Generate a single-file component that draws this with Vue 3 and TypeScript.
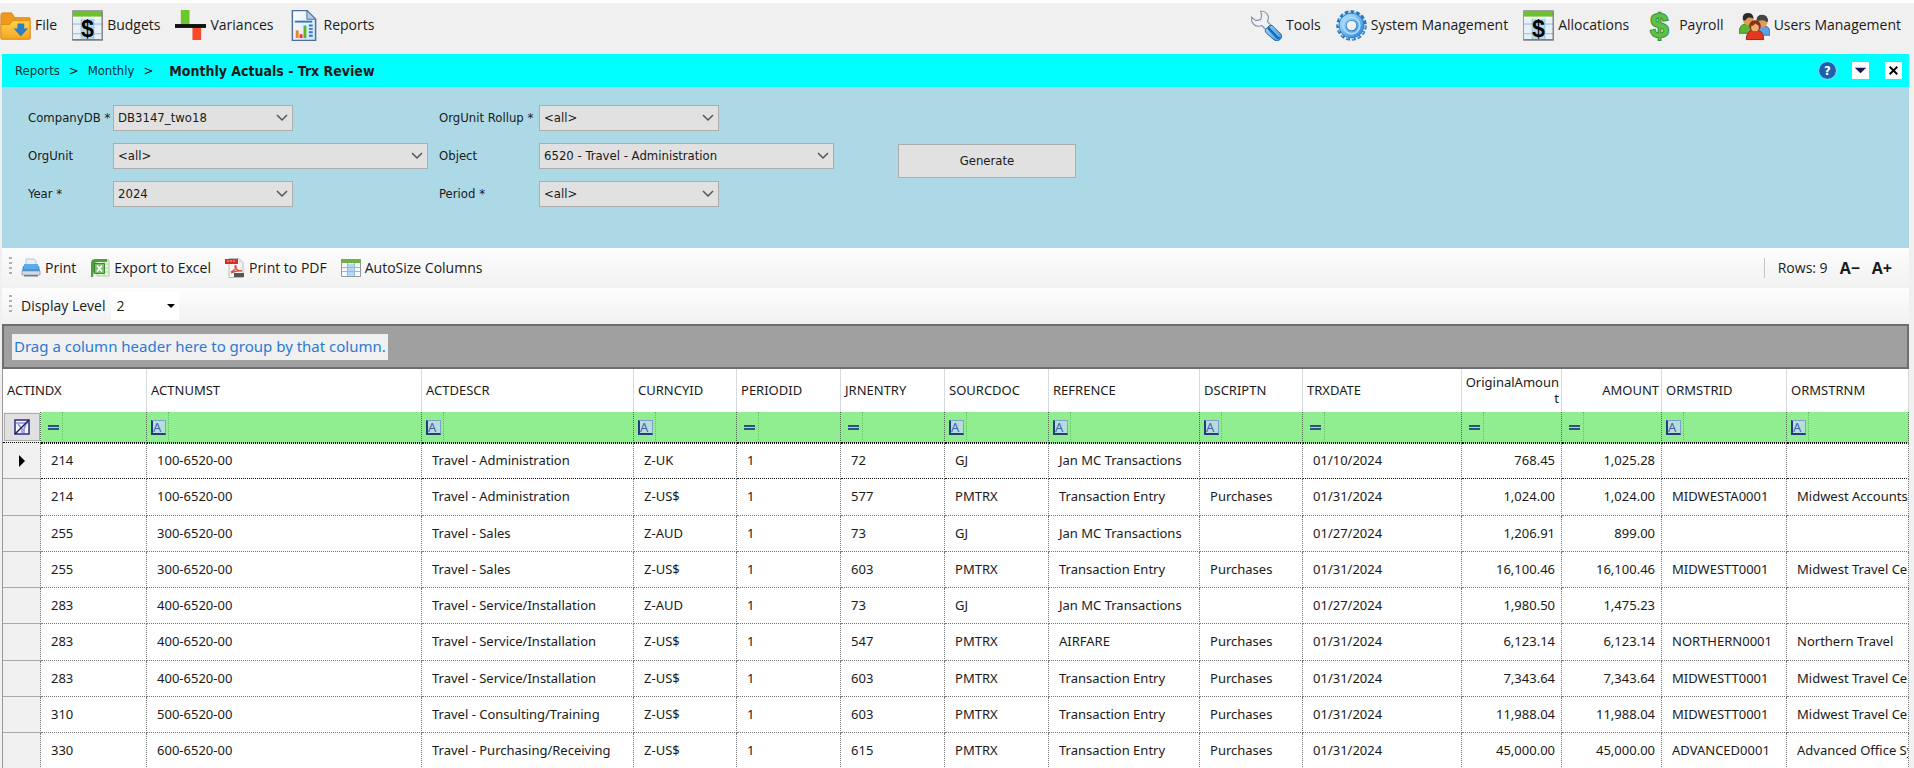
<script setup lang="ts">
import { ref } from 'vue'

interface MenuItem { label: string; icon: string; glyph?: string }
interface Column { key: string; width: number; numeric?: boolean; op: 'A' | '=' }
interface Field { id: string; label: string; value: string; wide?: boolean }

const leftMenu: MenuItem[] = [
  { label: 'File', icon: 'i-folder' },
  { label: 'Budgets', icon: 'i-budget', glyph: 'glyph-dollar' },
  { label: 'Variances', icon: 'i-variance' },
  { label: 'Reports', icon: 'i-report' },
]
const rightMenu: MenuItem[] = [
  { label: 'Tools', icon: 'i-wrench' },
  { label: 'System Management', icon: 'i-gear' },
  { label: 'Allocations', icon: 'i-budget', glyph: 'glyph-dollar' },
  { label: 'Payroll', icon: '', glyph: 'glyph-payroll' },
  { label: 'Users Management', icon: 'i-users' },
]
const tools: MenuItem[] = [
  { label: 'Print', icon: 'i-printer' },
  { label: 'Export to Excel', icon: 'i-excel' },
  { label: 'Print to PDF', icon: 'i-pdf' },
  { label: 'AutoSize Columns', icon: 'i-columns' },
]
const fields: Field[] = [
  { id: 'company', label: 'CompanyDB *', value: 'DB3147_two18' },
  { id: 'rollup', label: 'OrgUnit Rollup *', value: '<all>' },
  { id: 'orgunit', label: 'OrgUnit', value: '<all>', wide: true },
  { id: 'object', label: 'Object', value: '6520 - Travel - Administration', wide: true },
  { id: 'year', label: 'Year *', value: '2024' },
  { id: 'period', label: 'Period *', value: '<all>' },
]
const columns: Column[] = [
  { key: 'ACTINDX', width: 106, op: '=' },
  { key: 'ACTNUMST', width: 275, op: 'A' },
  { key: 'ACTDESCR', width: 212, op: 'A' },
  { key: 'CURNCYID', width: 103, op: 'A' },
  { key: 'PERIODID', width: 104, op: '=' },
  { key: 'JRNENTRY', width: 104, op: '=' },
  { key: 'SOURCDOC', width: 104, op: 'A' },
  { key: 'REFRENCE', width: 151, op: 'A' },
  { key: 'DSCRIPTN', width: 103, op: 'A' },
  { key: 'TRXDATE', width: 159, op: '=' },
  { key: 'OriginalAmount', width: 100, numeric: true, op: '=' },
  { key: 'AMOUNT', width: 100, numeric: true, op: '=' },
  { key: 'ORMSTRID', width: 125, op: 'A' },
  { key: 'ORMSTRNM', width: 0, op: 'A' },
]
const rows: string[][] = [
  ['214', '100-6520-00', 'Travel - Administration', 'Z-UK', '1', '72', 'GJ', 'Jan MC Transactions', '', '01/10/2024', '768.45', '1,025.28', '', ''],
  ['214', '100-6520-00', 'Travel - Administration', 'Z-US$', '1', '577', 'PMTRX', 'Transaction Entry', 'Purchases', '01/31/2024', '1,024.00', '1,024.00', 'MIDWESTA0001', 'Midwest Accounts'],
  ['255', '300-6520-00', 'Travel - Sales', 'Z-AUD', '1', '73', 'GJ', 'Jan MC Transactions', '', '01/27/2024', '1,206.91', '899.00', '', ''],
  ['255', '300-6520-00', 'Travel - Sales', 'Z-US$', '1', '603', 'PMTRX', 'Transaction Entry', 'Purchases', '01/31/2024', '16,100.46', '16,100.46', 'MIDWESTT0001', 'Midwest Travel Center'],
  ['283', '400-6520-00', 'Travel - Service/Installation', 'Z-AUD', '1', '73', 'GJ', 'Jan MC Transactions', '', '01/27/2024', '1,980.50', '1,475.23', '', ''],
  ['283', '400-6520-00', 'Travel - Service/Installation', 'Z-US$', '1', '547', 'PMTRX', 'AIRFARE', 'Purchases', '01/31/2024', '6,123.14', '6,123.14', 'NORTHERN0001', 'Northern Travel'],
  ['283', '400-6520-00', 'Travel - Service/Installation', 'Z-US$', '1', '603', 'PMTRX', 'Transaction Entry', 'Purchases', '01/31/2024', '7,343.64', '7,343.64', 'MIDWESTT0001', 'Midwest Travel Center'],
  ['310', '500-6520-00', 'Travel - Consulting/Training', 'Z-US$', '1', '603', 'PMTRX', 'Transaction Entry', 'Purchases', '01/31/2024', '11,988.04', '11,988.04', 'MIDWESTT0001', 'Midwest Travel Center'],
  ['330', '600-6520-00', 'Travel - Purchasing/Receiving', 'Z-US$', '1', '615', 'PMTRX', 'Transaction Entry', 'Purchases', '01/31/2024', '45,000.00', '45,000.00', 'ADVANCED0001', 'Advanced Office Systems'],
]
const active = ref(0)
</script>

<template>
  <svg class="defs" width="0" height="0" aria-hidden="true">
    <defs>
      <linearGradient id="g-fold" x2="0" y2="1"><stop offset="0" stop-color="#ffd24a" /><stop offset="1" stop-color="#f5a623" /></linearGradient>
      <linearGradient id="g-blue" x2="1" y2="1"><stop offset="0" stop-color="#a9dcfb" /><stop offset="1" stop-color="#3b8fdc" /></linearGradient>
      <linearGradient id="g-page" x2="1" y2="1"><stop offset="0" stop-color="#ffffff" /><stop offset="1" stop-color="#cfe3f7" /></linearGradient>
    </defs>
    <symbol id="i-folder" viewBox="0 0 32 32">
      <path d="M1 5q0-2 2-2h9l3 5h15q1 0 1 1v20q0 1-1 1H2q-1 0-1-1z" fill="#ef9a1a" stroke="#d9820c" />
      <path d="M1 15h9l3-4h18v18q0 1-1 1H2q-1 0-1-1z" fill="url(#g-fold)" stroke="#e08e12" />
      <path d="M18 14h7v5h4l-7.500 8-7.500-8h4z" fill="#2c7fc4" />
    </symbol>
    <symbol id="i-budget" viewBox="0 0 32 32">
      <path d="M.5.5h31v31H.5z" fill="#e6f0f6" stroke="#9a9a9a" />
      <path d="M1 1h30v6H1z" fill="#6cc22e" />
      <path d="M1 7h30v2H1z" fill="#fff" />
      <path d="M10 9h12v22H10z" fill="#b4d9ec" />
      <path d="M1 14.500h30M1 24.500h30M9.500 9v22M22.500 9v22" stroke="#8dbdd5" />
      <path d="M.5 30.500h31M31 2v29" stroke="#777" />
    </symbol>
    <symbol id="i-variance" viewBox="0 0 32 32">
      <path d="M6 0h9v15H6z" fill="#6cc72f" />
      <path d="M18 17h9v14h-9z" fill="#fb4a2b" />
      <path d="M0 14.500h32v4H0z" fill="#111" />
    </symbol>
    <symbol id="i-report" viewBox="0 0 32 32">
      <path d="M4.500.500h15l9 9v22h-24z" fill="url(#g-page)" stroke="#4c6f9e" stroke-width="1.500" />
      <path d="M19.500.500v9h9z" fill="#b7cbe4" stroke="#4c6f9e" />
      <path d="M7 12h18" stroke="#2f79c6" stroke-width="2" />
      <path d="M8 21h3v8H8z" fill="#f0812a" /><path d="M12 25h3v4h-3z" fill="#e33" /><path d="M16 16h3v13h-3z" fill="#58b52c" />
      <path d="M23.500 15v14" stroke="#2f79c6" stroke-width="4" stroke-dasharray="2 1.500" />
    </symbol>
    <symbol id="i-wrench" viewBox="0 0 32 32">
      <path d="M10 1q6 0 8 6 0 3-1 5l6 6-5 5-7-7q-5 2-8-1Q0 12 0 7l5 4 5-1 1-4z" fill="#eef1f7" stroke="#8b93a6" stroke-width="1.200" stroke-linejoin="round" />
      <path d="M15 20l4-4q3-1 5 2l7 7q2 3-1 5.500t-6 .5l-8-7q-2-2-1-4z" fill="url(#g-blue)" stroke="#1f6ba8" />
      <path d="M19 19l9 9" stroke="#1b6cae" stroke-width="4" stroke-linecap="round" />
      <path d="M20 18l9 9" stroke="#6cc4f2" stroke-width="1.500" stroke-linecap="round" />
    </symbol>
    <symbol id="i-gear" viewBox="0 0 32 32">
      <circle cx="16" cy="16" r="13.500" fill="none" stroke="#2878bd" stroke-width="4.500" stroke-dasharray="3.800 1.855" />
      <circle cx="16" cy="16" r="13" fill="none" stroke="#8ccbf6" stroke-width="3" stroke-dasharray="2.300 3.355" stroke-dashoffset="-.75" />
      <circle cx="16" cy="16" r="9" fill="none" stroke="#2878bd" stroke-width="8" />
      <circle cx="16" cy="16" r="9" fill="none" stroke="url(#g-blue)" stroke-width="6.500" />
      <circle cx="16" cy="16" r="8.500" fill="none" stroke="#a6dafa" stroke-width="2" />
    </symbol>
    <symbol id="i-users" viewBox="0 0 32 32">
      <path d="M0 24q0-10 9-10t8 10z" fill="#5db531" stroke="#3b8a1c" />
      <path d="M15 26q0-10 9-10t8 10z" fill="#5c9fe3" stroke="#3a72b5" />
      <circle cx="9.500" cy="10" r="5.500" fill="#e39a55" /><path d="M4 10q-1-7 5-7t6 6q-3-2-6-1l-3 3z" fill="#2a2a2a" />
      <circle cx="24" cy="12" r="5.500" fill="#e39a55" /><path d="M18 11q0-6 6-6t6 7h-2q-3-2-7-1z" fill="#444" />
      <path d="M7.500 30.500q0-10 9-10t9 10z" fill="#e23822" stroke="#a51f10" />
      <circle cx="16.500" cy="16.500" r="6" fill="#8a3216" /><circle cx="16.500" cy="18" r="4" fill="#f0b070" />
      <path d="M12 16q4 1 5-3 1 3 4 3l-1-5h-6z" fill="#8a3216" />
    </symbol>
    <symbol id="i-printer" viewBox="0 0 20 20">
      <path d="M5 1h8l2 2v7H5z" fill="#e4eef8" stroke="#b5c7da" />
      <path d="M2 8h3v3h10V8h3l1 5H1z" fill="#3f94dc" /><path d="M3 6h14v5H3z" fill="#5aabea" />
      <path d="M1 13h18v4H1z" fill="#d2dbe5" stroke="#8995a3" stroke-width=".7" /><path d="M3 17h14v1.500H3z" fill="#707a88" />
    </symbol>
    <symbol id="i-excel" viewBox="0 0 20 20">
      <path d="M7 2h12v16H7z" fill="#eaf5e3" stroke="#a8cf94" /><path d="M14 3v15M8 6h11M8 10h11M8 14h11" stroke="#b5d8a4" />
      <path d="M1 5q0-4 5-4h11v3H7q-2 0-2 2l-2 13H1z" fill="#4f9e3c" />
      <path d="M4.500 5.500h10v10h-10z" fill="#7cc065" stroke="#3c8a2e" /><path d="M7 7.500l5 6M12 7.500l-5 6" stroke="#fff" stroke-width="1.800" />
    </symbol>
    <symbol id="i-pdf" viewBox="0 0 20 20">
      <path d="M4 .5h10l4 4v15H4z" fill="#f6f6f6" stroke="#bbb" />
      <path d="M14 .5v4h4z" fill="#ddd" />
      <path d="M0 1h13v5H0z" fill="#dc2a22" /><path d="M2 3h9" stroke="#f0908a" stroke-width="1.500" stroke-dasharray="2 1" />
      <path d="M6 14q6-3 5-6-1-1-1 1 2 4 7 4-4-1-11 2" fill="none" stroke="#e0473d" stroke-width="1.300" />
      <path d="M9 15h10v4H9z" fill="#555" />
    </symbol>
    <symbol id="i-columns" viewBox="0 0 20 20">
      <path d="M.5 1.500h19v17H.5z" fill="#f4f8fb" stroke="#8f9aa5" />
      <path d="M0 1h20v4H0z" fill="#6fb244" /><path d="M7 6h6v12H7z" fill="#b5d8f2" />
      <path d="M1 9.500h18M1 13.500h18M6.500 5v13M13.500 5v13" stroke="#9bb7cc" />
    </symbol>
  </svg>

  <div class="app">
    <nav class="menubar">
      <div v-for="(group, gi) in [leftMenu, rightMenu]" :key="gi" class="menu-group">
        <button v-for="m in group" :key="m.label" type="button" class="menu-item">
          <svg class="icon-lg" viewBox="0 0 32 32" aria-hidden="true">
            <use v-if="m.icon" :href="'#' + m.icon" width="32" height="32" />
            <text v-if="m.glyph" x="16" y="28" text-anchor="middle" :class="m.glyph">$</text>
          </svg>{{ m.label }}
        </button>
      </div>
    </nav>

    <main class="window">
      <header class="titlebar">
        <div class="crumbs">
          <a href="#reports">Reports</a><span>&gt;</span><a href="#monthly">Monthly</a><span>&gt;</span>
          <h1>Monthly Actuals - Trx Review</h1>
        </div>
        <div class="win-actions">
          <button type="button" aria-label="Help" class="help">?</button>
          <button type="button" aria-label="Minimize" class="sq"><svg viewBox="0 0 18 18"><path d="M3 6h12l-6 6z" fill="#1c1450" /></svg></button>
          <button type="button" aria-label="Close" class="sq"><svg viewBox="0 0 18 18"><path d="M5 5l8 8M13 5l-8 8" stroke="#000" stroke-width="2" /></svg></button>
        </div>
      </header>

      <form class="filters" @submit.prevent>
        <div class="field-grid">
          <template v-for="f in fields" :key="f.id">
            <label :for="f.id">{{ f.label }}</label>
            <div class="combo" :class="{ wide: f.wide }">
              <select :id="f.id"><option>{{ f.value }}</option></select>
              <svg class="chev" viewBox="0 0 12 8"><path d="M1 1l5 5 5-5" fill="none" stroke="#555" stroke-width="1.500" /></svg>
            </div>
          </template>
        </div>
        <button type="submit" class="generate">Generate</button>
      </form>

      <div class="toolbar">
        <i class="grip" />
        <button v-for="t in tools" :key="t.label" type="button" class="tool">
          <svg class="icon-sm" aria-hidden="true"><use :href="'#' + t.icon" /></svg>{{ t.label }}
        </button>
        <div class="toolbar-end">
          <span>Rows: {{ rows.length }}</span>
          <button type="button" class="zoom" aria-label="Smaller text">A−</button>
          <button type="button" class="zoom" aria-label="Larger text">A+</button>
        </div>
      </div>

      <div class="toolbar second">
        <i class="grip" />
        <label for="level" class="level-label">Display Level</label>
        <div class="combo level">
          <select id="level"><option>2</option></select>
          <svg class="tri" viewBox="0 0 8 4"><path d="M0 0h8l-4 4z" fill="#000" /></svg>
        </div>
      </div>

      <section class="grid">
        <div class="group-box"><span>Drag a column header here to group by that column.</span></div>
        <table>
          <colgroup>
            <col class="c-sel" />
            <col v-for="c in columns" :key="c.key" :style="c.width ? { width: c.width + 'px' } : undefined" />
          </colgroup>
          <thead>
            <tr class="head">
              <th v-for="(c, i) in columns" :key="c.key" :colspan="i === 0 ? 2 : 1" :class="{ num: c.numeric }">{{ c.key }}</th>
            </tr>
            <tr class="filter">
              <td class="clear">
                <button type="button" aria-label="Clear filters">
                  <svg viewBox="0 0 16 16"><path d="M1 1h14v14H1z" fill="#f4f4fb" stroke="#2a2a80" stroke-width="1.500" /><path d="M2 4h12M4 5l4 5v4M12 5l-2 5v4" fill="none" stroke="#8c8cd8" stroke-width="1.500" /><path d="M1 15L15 1" stroke="#1c1c60" stroke-width="1.500" /></svg>
                </button>
              </td>
              <td v-for="c in columns" :key="c.key">
                <div class="filter-cell">
                  <button type="button" :aria-label="'Operator for ' + c.key">
                    <svg v-if="c.op === '='" viewBox="0 0 16 16"><path d="M3 6h11v2H3zM3 9h11v2H3z" fill="#2a5580" /></svg>
                    <span v-else class="op-a">A</span>
                  </button>
                  <input type="text" :aria-label="'Filter ' + c.key" />
                </div>
              </td>
            </tr>
          </thead>
          <tbody>
            <tr v-for="(r, ri) in rows" :key="ri" :class="{ active: ri === active }" @click="active = ri">
              <td class="sel"><svg v-if="ri === active" viewBox="0 0 6 12"><path d="M0 0l6 6-6 6z" fill="#000" /></svg></td>
              <td v-for="(v, ci) in r" :key="ci" :class="{ num: columns[ci].numeric }">{{ v }}</td>
            </tr>
          </tbody>
        </table>
      </section>
    </main>
  </div>
</template>

<style>
body {
  margin: 0;
  background: #f0f0f0;
}
</style>

<style scoped>
.defs {
  position: absolute;
}
.glyph-dollar {
  font: bold 24px "Liberation Sans", sans-serif;
  fill: #000;
}
.glyph-payroll {
  font: bold 34px "Liberation Sans", sans-serif;
  fill: #5fc048;
  stroke: #2f8f38;
  stroke-width: 2px;
  paint-order: stroke;
}
.app {
  border-top: 3px solid #fff;
  background: #f0f0f0;
  font: 13px/16px "DejaVu Sans Condensed", "DejaVu Sans", sans-serif;
  color: #1a1a1a;
  overflow: hidden;
}
button,
select,
input {
  font: inherit;
  color: inherit;
  border: 0;
  background: none;
  padding: 0;
  margin: 0;
  border-radius: 0;
}
.menubar {
  display: flex;
  justify-content: space-between;
  height: 51px;
  padding: 0 13px 0 0;
  font: 14px/20px "Open Sans", "Noto Sans", sans-serif;
}
.menu-group {
  display: flex;
  gap: 15px;
  align-items: center;
  height: 44px;
}
.menu-item {
  display: flex;
  align-items: center;
  gap: 4px;
  white-space: nowrap;
}
.icon-lg {
  width: 31px;
  height: 31px;
  overflow: visible;
}
.window {
  margin: 0 5px 0 2px;
}
.titlebar {
  display: flex;
  justify-content: space-between;
  align-items: center;
  height: 33px;
  padding: 0 7px 0 13px;
  background: #00ffff;
}
.crumbs {
  display: flex;
  align-items: center;
  gap: 9px;
}
.crumbs a {
  color: #103038;
  text-decoration: none;
}
.crumbs h1 {
  margin: 0 0 0 7px;
  font-size: 14px;
  line-height: 16px;
}
.win-actions {
  display: flex;
  align-items: center;
  gap: 16px;
}
.win-actions button {
  width: 17px;
  height: 17px;
}
.win-actions .help {
  border-radius: 50%;
  background: #1f5fae;
  color: #fff;
  font-weight: bold;
  outline: 1px solid #8fc4ea;
}
.sq {
  background: #fff;
}
.sq svg {
  display: block;
}
.filters {
  display: flex;
  gap: 64px;
  padding: 18px 26px 41px;
  background: #add8e6;
}
.field-grid {
  display: grid;
  grid-template-columns: 85px 326px 100px 295px;
  grid-auto-rows: 26px;
  row-gap: 12px;
  align-items: center;
}
.field-grid label {
  white-space: nowrap;
}
.combo {
  position: relative;
  width: 180px;
}
.combo.wide {
  width: 100%;
  max-width: 315px;
}
.combo select {
  display: block;
  width: 100%;
  height: 26px;
  padding: 0 24px 0 4px;
  appearance: none;
  background: #e1e1e1;
  border: 1px solid #adadad;
}
.chev {
  position: absolute;
  right: 5px;
  top: 9px;
  width: 12px;
  height: 8px;
  pointer-events: none;
}
.generate {
  width: 178px;
  height: 34px;
  margin-top: 39px;
  background: #e1e1e1;
  border: 1px solid #adadad;
}
.toolbar {
  display: flex;
  align-items: center;
  height: 40px;
  padding: 0 0 0 7px;
  background: linear-gradient(#fdfdfd, #f1f1f1);
  font: 14px/20px "Open Sans", "Noto Sans", sans-serif;
}
.toolbar.second {
  height: 36px;
}
.grip {
  width: 3px;
  height: 17px;
  margin: 0 9px 6px 0;
  background: repeating-linear-gradient(#b0b0b0 0 2px, transparent 2px 5px);
}
.tool {
  display: flex;
  align-items: center;
  gap: 4px;
  margin-right: 14px;
  white-space: nowrap;
}
.icon-sm {
  width: 20px;
  height: 20px;
}
.toolbar-end {
  display: flex;
  align-items: center;
  gap: 12px;
  margin-left: auto;
  padding: 0 17px 0 13px;
  border-left: 1px solid #c4c4c4;
}
.zoom {
  font-weight: bold;
  font-size: 16px;
}
.level-label {
  margin-right: 6px;
}
.combo.level {
  width: 68px;
}
.combo.level select {
  height: 28px;
  padding-left: 5px;
  background: #fff;
  border: 0;
}
.tri {
  position: absolute;
  right: 4px;
  top: 12px;
  width: 8px;
  height: 4px;
  pointer-events: none;
}
.grid {
  overflow: hidden;
  font-family: "Noto Sans", "DejaVu Sans Condensed", sans-serif;
}
.group-box {
  display: flex;
  align-items: center;
  height: 45px;
  box-sizing: border-box;
  padding: 0 8px;
  border: 2px solid #6e6e6e;
  background: #a0a0a0;
}
.group-box span {
  padding: 2px 2px 4px;
  background: #f0f0f0;
  color: #2a7ad4;
  font-size: 15px;
  line-height: 20px;
}
table {
  width: 100%;
  table-layout: fixed;
  border-collapse: separate;
  border-spacing: 0;
  border-left: 1px solid #9a9a9a;
  background: #fff;
}
.c-sel {
  width: 38px;
}
th,
td {
  box-sizing: border-box;
  overflow: hidden;
  text-align: left;
  font-weight: normal;
  white-space: nowrap;
}
.head th {
  height: 43px;
  padding: 0 2px 2px 4px;
  border-right: 1px solid #d4dae0;
  white-space: normal;
  overflow-wrap: anywhere;
}
.head th.num,
td.num {
  text-align: right;
}
.head th.num {
  padding: 0 2px 2px 0;
}
.filter td {
  height: 31px;
  padding: 0;
  background: #90ee90;
  border-right: 1px dotted #4f6f4f;
  border-bottom: 1px dotted #000;
}
.filter .clear {
  background: #f0f0f0;
}
.clear button {
  display: flex;
  align-items: center;
  justify-content: center;
  width: 36px;
  height: 28px;
  margin-left: 1px;
  background: #e0e0e0;
  border: 1px solid #adadad;
}
.clear svg {
  width: 16px;
  height: 16px;
}
.filter-cell {
  display: flex;
  height: 30px;
}
.filter-cell button {
  flex: none;
  width: 22px;
  padding-left: 4px;
  border-right: 1px dotted #7fae7f;
}
.filter-cell button svg {
  display: block;
  width: 16px;
  height: 16px;
}
.filter-cell input {
  min-width: 0;
  flex: 1;
}
.op-a {
  display: block;
  width: 12px;
  height: 12px;
  border: 1px solid #7f9fd0;
  border-left: 2px solid #1f3f78;
  border-bottom: 2px solid #1f3f78;
  background: #b8dcd8;
  color: #3f62b8;
  font-size: 13px;
  line-height: 13px;
  text-align: left;
}
tbody td {
  height: 36px;
  padding: 0 6px 2px 10px;
  border-right: 1px dotted #777;
  border-bottom: 1px dotted #777;
}
tbody tr:nth-child(4n + 2) td {
  height: 37px;
}
tbody td.sel {
  padding: 0 0 0 16px;
  background: #f0f0f0;
  border-bottom: 1px solid #a8a8a8;
}
.sel svg {
  display: block;
  width: 6px;
  height: 12px;
}
.active td:not(.sel) {
  border-bottom-color: #111;
  border-top: 1px dotted #111;
}
</style>
